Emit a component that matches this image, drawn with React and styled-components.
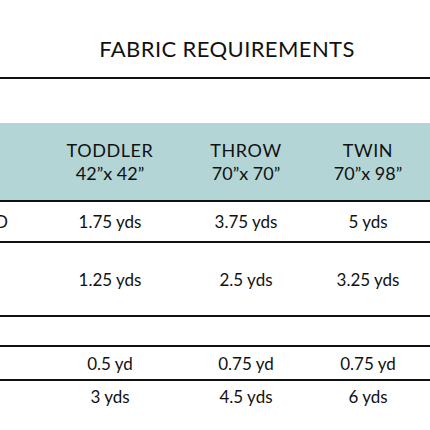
import React from "react";
import styled, { createGlobalStyle } from "styled-components";

const GlobalStyle = createGlobalStyle`
  html, body {
    margin: 0;
    padding: 0;
    background: #ffffff;
  }
  body {
    font-family: Lato, "Open Sans", sans-serif;
    color: #111111;
  }
`;

const Page = styled.div`
  width: 430px;
  height: 430px;
  overflow: hidden;
  background: #ffffff;
`;

const Title = styled.h1`
  margin: 0;
  height: 77px;
  padding-left: 24px;
  box-sizing: border-box;
  display: flex;
  align-items: flex-end;
  justify-content: center;
  padding-bottom: 15px;
  font-size: 22px;
  font-weight: 400;
  letter-spacing: 0.4px;
  color: #111111;
`;

const Rule = styled.div`
  height: 2px;
  background: #111111;
`;

const Table = styled.div`
  margin-top: 44px;
  display: flex;
  flex-direction: column;
`;

const Row = styled.div`
  display: grid;
  grid-template-columns: 44px 132px 140px 104px 1fr;
  height: ${({ $h }) => $h}px;
  background: ${({ $head }) => ($head ? "#b4d5d5" : "#ffffff")};
  border-bottom: ${({ $last }) => ($last ? "none" : "2px solid #111111")};
  align-items: center;
`;

const Label = styled.div`
  overflow: hidden;
  white-space: nowrap;
  display: flex;
  justify-content: flex-end;
  padding-right: 36px;
  font-size: 17px;
`;

const Cell = styled.div`
  text-align: center;
  font-size: 17px;
  white-space: nowrap;
`;

const HeadCell = styled.div`
  text-align: center;
  font-size: 18px;
  line-height: 23px;
  white-space: nowrap;
  .name {
    letter-spacing: 0.6px;
  }
  .size {
    font-size: 18px;
  }
`;

const sizes = [
  { name: "TODDLER", dims: "42”x 42”" },
  { name: "THROW", dims: "70”x 70”" },
  { name: "TWIN", dims: "70”x 98”" },
];

const rows = [
  { label: "BACKGROUND", h: 39, vals: ["1.75 yds", "3.75 yds", "5 yds"] },
  { label: "", h: 72, vals: ["1.25 yds", "2.5 yds", "3.25 yds"] },
  { label: "", h: 28, vals: ["", "", ""] },
  { label: "", h: 32, vals: ["0.5 yd", "0.75 yd", "0.75 yd"] },
  { label: "", h: 30, vals: ["3 yds", "4.5 yds", "6 yds"], last: true },
];

const App = () => {
  return (
    <Page>
      <GlobalStyle />
      <Title>FABRIC REQUIREMENTS</Title>
      <Rule />
      <Table>
        <Row $h={77} $head>
          <Label />
          {sizes.map((s) => (
            <HeadCell key={s.name}>
              <div className="name">{s.name}</div>
              <div className="size">{s.dims}</div>
            </HeadCell>
          ))}
          <div />
        </Row>
        {rows.map((r, i) => (
          <Row key={i} $h={r.h} $last={r.last}>
            <Label>{r.label}</Label>
            {r.vals.map((v, j) => (
              <Cell key={j}>{v}</Cell>
            ))}
            <div />
          </Row>
        ))}
      </Table>
    </Page>
  );
};

export default App;
